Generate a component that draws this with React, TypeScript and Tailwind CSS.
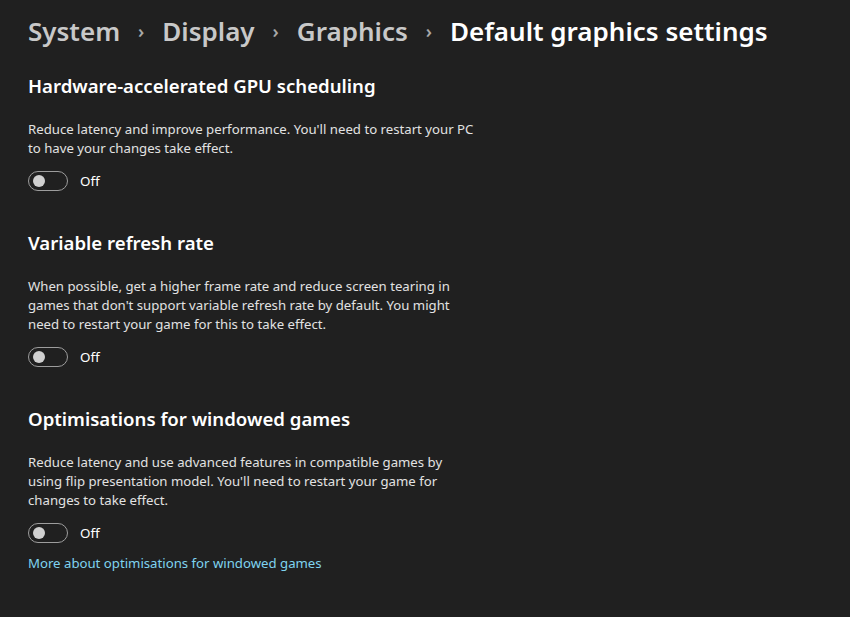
import React from "react";

function Toggle() {
  return (
    <div className="flex items-center gap-3 h-5">
      <div className="w-10 h-5 rounded-full border border-[#9d9d9d] flex items-center pl-[4px]">
        <div className="w-3 h-3 rounded-full bg-[#d0d0d0]" />
      </div>
      <span className="text-[13.4px] text-white">Off</span>
    </div>
  );
}

function Section({ title, lines, link }: { title: string; lines: string[]; link?: string }) {
  return (
    <div className="flex flex-col">
      <h2 className="text-[18.6px] font-semibold text-white leading-[28px]">{title}</h2>
      <div className="mt-[20px] text-[13.2px] leading-[19px] text-[#e2e2e2]">
        {lines.map((l) => (
          <div key={l} className="whitespace-nowrap">{l}</div>
        ))}
      </div>
      <div className="mt-[13px]">
        <Toggle />
      </div>
      {link && <a className="mt-[11px] text-[13.2px] leading-[19px] text-[#7fd3ef]">{link}</a>}
    </div>
  );
}

export default function App() {
  const crumbs = ["System", "Display", "Graphics"];
  return (
    <div
      className="w-[850px] h-[617px] bg-[#202020] px-[28px] pt-[12px] overflow-hidden"
      style={{ fontFamily: '"Segoe UI", "Noto Sans", sans-serif' }}
    >
      <div className="flex items-center text-[26px] font-semibold leading-[38px]">
        {crumbs.map((c) => (
          <React.Fragment key={c}>
            <span className="text-[#c8c8c8]">{c}</span>
            <span className="text-[#a8a8a8] text-[18px] px-[18px]">&#x203A;</span>
          </React.Fragment>
        ))}
        <span className="text-white">Default graphics settings</span>
      </div>
      <div className="flex flex-col gap-[38px] mt-[22px]">
        <Section
          title="Hardware-accelerated GPU scheduling"
          lines={["Reduce latency and improve performance. You'll need to restart your PC", "to have your changes take effect."]}
        />
        <Section
          title="Variable refresh rate"
          lines={[
            "When possible, get a higher frame rate and reduce screen tearing in",
            "games that don't support variable refresh rate by default. You might",
            "need to restart your game for this to take effect.",
          ]}
        />
        <Section
          title="Optimisations for windowed games"
          lines={[
            "Reduce latency and use advanced features in compatible games by",
            "using flip presentation model. You'll need to restart your game for",
            "changes to take effect.",
          ]}
          link="More about optimisations for windowed games"
        />
      </div>
    </div>
  );
}
